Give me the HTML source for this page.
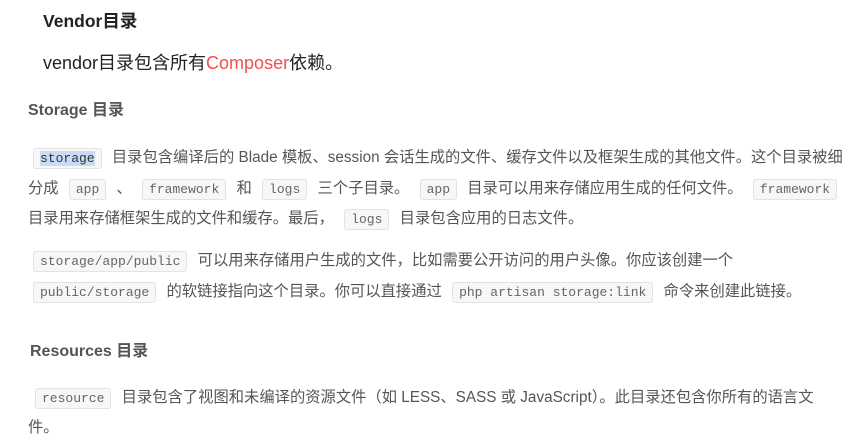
<!DOCTYPE html>
<html><head><meta charset="utf-8"><style>
body{margin:0;width:855px;height:440px;background:#fff;overflow:hidden;position:relative;font-family:"Liberation Sans","Noto Sans CJK SC",sans-serif;}
.l{position:absolute;white-space:nowrap;line-height:22px;font-size:15.3px;color:#555;}
code{font-family:"Liberation Mono","DejaVu Sans Mono",monospace;font-size:13px;color:#666;background:#f7f7f7;border:1px solid #e3e3e3;border-radius:3px;padding:2px 6px;margin:0 6px 0 0;}
.sp{margin-left:6px;}
</style></head><body>
<div class="l" style="left:43px;top:10px;font-size:17.5px;color:#222;font-weight:bold">Vendor目录</div>
<div class="l" style="left:43px;top:52px;font-size:18px;color:#222">vendor目录包含所有<span style="color:#f05050">Composer</span>依赖。</div>
<div class="l" style="left:28px;top:100px;font-size:16px;color:#555;font-weight:bold">Storage 目录</div>
<div class="l" style="left:33px;top:147px"><code><span style="background:#c8dcf5;color:#333">storage</span></code> 目录包含编译后的 Blade 模板、session 会话生成的文件、缓存文件以及框架生成的其他文件。这个目录被细</div>
<div class="l" style="left:28px;top:178px">分成 <code class="sp">app</code> 、 <code class="sp">framework</code> 和 <code class="sp">logs</code> 三个子目录。 <code class="sp">app</code> 目录可以用来存储应用生成的任何文件。 <code class="sp">framework</code></div>
<div class="l" style="left:28px;top:208px">目录用来存储框架生成的文件和缓存。最后， <code class="sp">logs</code> 目录包含应用的日志文件。</div>
<div class="l" style="left:33px;top:250px"><code>storage/app/public</code> 可以用来存储用户生成的文件，比如需要公开访问的用户头像。你应该创建一个</div>
<div class="l" style="left:33px;top:281px"><code>public/storage</code> 的软链接指向这个目录。你可以直接通过 <code class="sp">php artisan storage:link</code> 命令来创建此链接。</div>
<div class="l" style="left:30px;top:341px;font-size:16px;color:#555;font-weight:bold">Resources 目录</div>
<div class="l" style="left:35px;top:387px"><code>resource</code> 目录包含了视图和未编译的资源文件（如 LESS、SASS 或 JavaScript）。此目录还包含你所有的语言文</div>
<div class="l" style="left:28px;top:417px">件。</div>
</body></html>
